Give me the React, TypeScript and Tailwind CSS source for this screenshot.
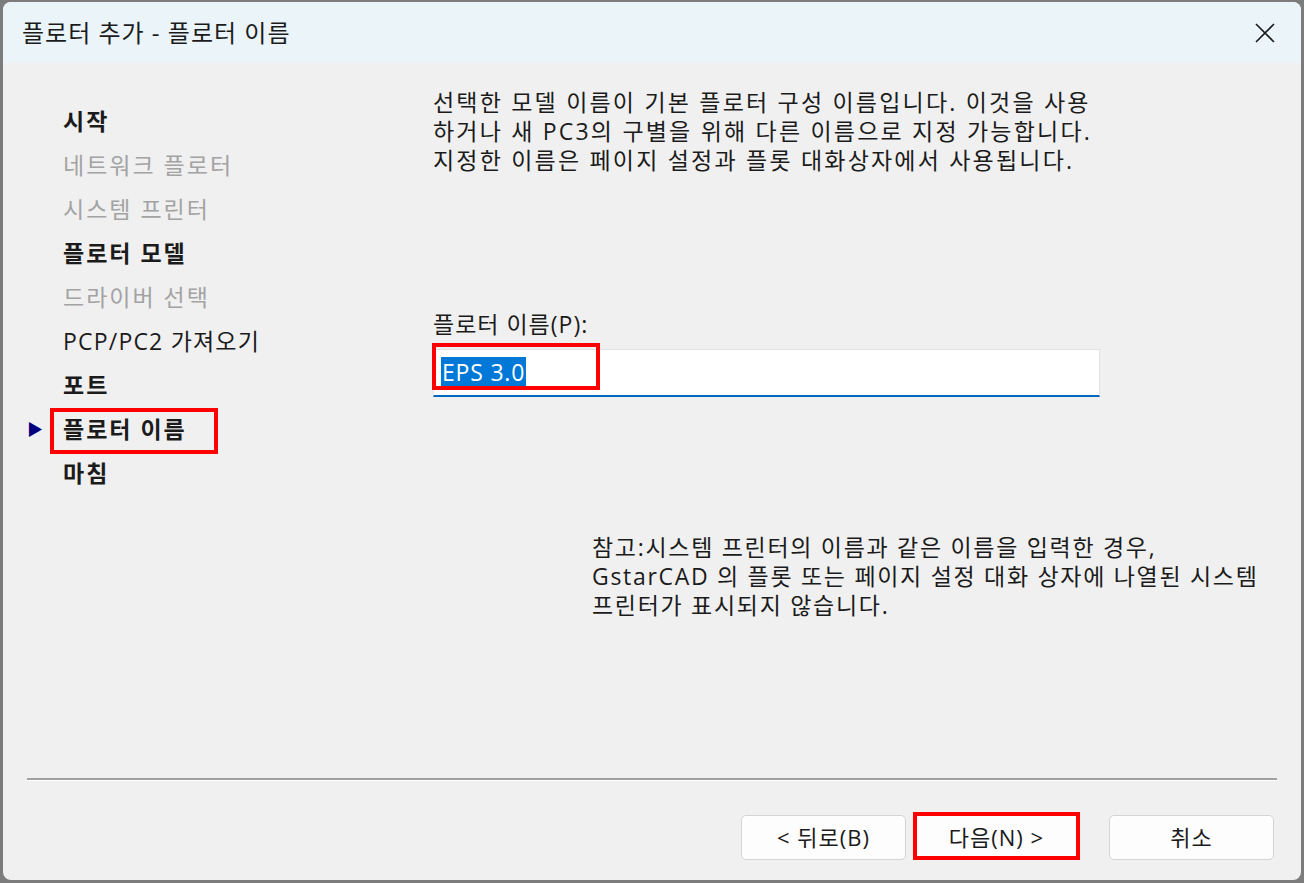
import React from 'react';

const steps = [
  { label: '시작', state: 'bold' },
  { label: '네트워크 플로터', state: 'off' },
  { label: '시스템 프린터', state: 'off' },
  { label: '플로터 모델', state: 'bold' },
  { label: '드라이버 선택', state: 'off' },
  { label: 'PCP/PC2 가져오기', state: 'normal' },
  { label: '포트', state: 'bold' },
  { label: '플로터 이름', state: 'current' },
  { label: '마침', state: 'bold' },
];

export default function App() {
  return (
    <div className="w-[1304px] h-[883px] bg-[#7c7c7c] pt-[2px] px-[3px] pb-[3px] font-['Open_Sans','Noto_Sans_CJK_KR',sans-serif] text-[#1b1b1b]">
      <div className="flex flex-col h-full rounded-[8px] overflow-hidden bg-[#f0f0f0]">
        {/* Title bar */}
        <div className="h-[61px] shrink-0 bg-[#eaf4f9] flex items-center justify-between pl-[19px] pr-[25px]">
          <span className="text-[24px] tracking-[1px] leading-none">플로터 추가 - 플로터 이름</span>
          <svg width="22" height="22" viewBox="0 0 22 22" className="text-[#1b1b1b]">
            <path d="M2 2L20 20M20 2L2 20" stroke="currentColor" strokeWidth="1.6" fill="none" />
          </svg>
        </div>

        {/* Main area */}
        <div className="flex-1 flex">
          {/* Step list */}
          <ul className="w-[430px] shrink-0 pl-[60px] pt-[36px]">
            {steps.map((s) => (
              <li
                key={s.label}
                className={
                  'relative h-[44px] flex items-center text-[23px] ' +
                  (s.state === 'off'
                    ? 'tracking-[2px] text-[#a3a3a3]'
                    : s.state === 'normal'
                    ? 'tracking-[1.2px] text-[#1b1b1b]'
                    : 'tracking-[2px] font-bold text-[#1b1b1b]')
                }
              >
                {s.state === 'current' && (
                  <>
                    <span className="absolute left-[-36px] text-[#00007f] text-[16px]">▶</span>
                    <span className="absolute left-[-13px] top-[1px] w-[168px] h-[46px] border-[4px] border-[#ff0000]" />
                  </>
                )}
                {s.label}
              </li>
            ))}
          </ul>

          {/* Content */}
          <div className="flex-1 pt-[25px] text-[23px] tracking-[2.2px] leading-[29px]">
            <p>
              선택한 모델 이름이 기본 플로터 구성 이름입니다. 이것을 사용
              <br />
              하거나 새 PC3의 구별을 위해 다른 이름으로 지정 가능합니다.
              <br />
              지정한 이름은 페이지 설정과 플롯 대화상자에서 사용됩니다.
            </p>

            <p className="mt-[135px] tracking-[1px]">플로터 이름(P):</p>
            <div className="relative mt-[10px] w-[667px] h-[48px] bg-white border border-[#e3e3e3] border-b-[2px] border-b-[#0067c0] flex items-center pl-[7px]">
              <span className="bg-[#0078d7] text-white tracking-[0.8px] text-[23px] leading-[31px] px-[1px]">EPS 3.0</span>
              <span className="absolute left-[-2px] top-[-7px] w-[168px] h-[47px] border-[4px] border-[#ff0000]" />
            </div>

            <p className="mt-[136px] ml-[159px] tracking-[1.7px]">
              참고:시스템 프린터의 이름과 같은 이름을 입력한 경우,
              <br />
              GstarCAD 의 플롯 또는 페이지 설정 대화 상자에 나열된 시스템
              <br />
              프린터가 표시되지 않습니다.
            </p>
          </div>
        </div>

        {/* Separator */}
        <div className="mx-[24px] shrink-0 border-t-[2px] border-t-[#a0a0a0] border-b border-b-white" />

        {/* Buttons */}
        <div className="shrink-0 flex justify-end pt-[34px] pb-[20px] pr-[27px] text-[22px] tracking-[1px]">
          <button className="w-[165px] h-[45px] rounded-[5px] bg-[#fdfdfd] border border-[#d4d4d4]">
            &lt; 뒤로(B)
          </button>
          <div className="relative ml-[8px]">
            <button className="w-[165px] h-[45px] rounded-[5px] bg-[#fdfdfd] border border-[#d4d4d4] border-b-[#0067c0]">
              다음(N) &gt;
            </button>
            <span className="absolute left-[-1px] top-[-3px] w-[167px] h-[48px] border-[4px] border-[#ff0000]" />
          </div>
          <button className="ml-[30px] w-[165px] h-[45px] rounded-[5px] bg-[#fdfdfd] border border-[#d4d4d4]">
            취소
          </button>
        </div>
      </div>
    </div>
  );
}
